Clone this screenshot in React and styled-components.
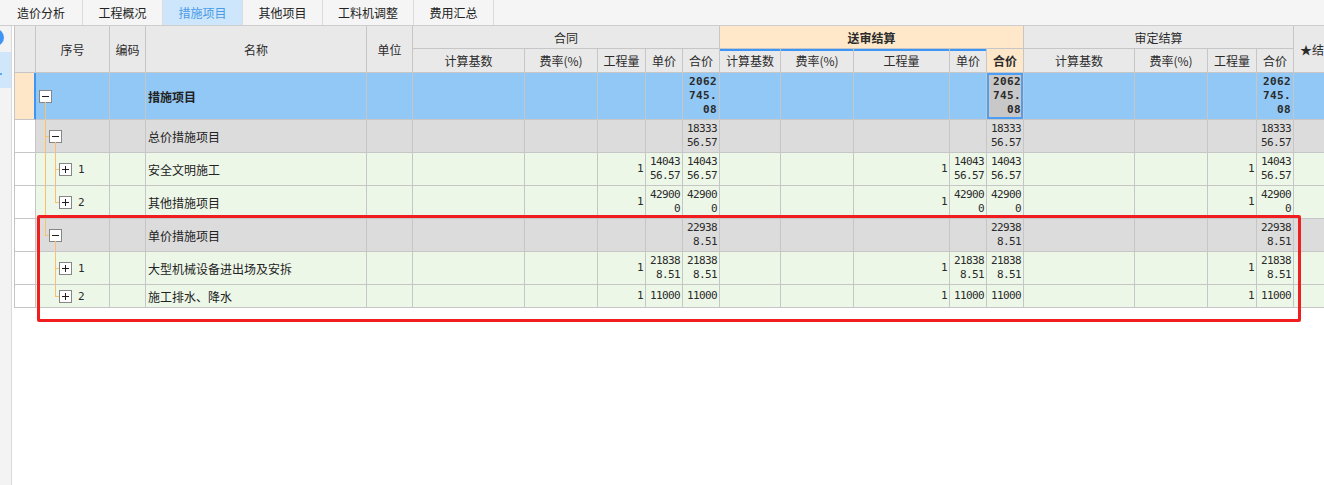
import React from 'react'
import styled, { createGlobalStyle } from 'styled-components'

const GlobalStyle = createGlobalStyle`
  html, body { margin: 0; padding: 0; background: #fff; }
`

const Page = styled.div`
  position: relative;
  width: 1324px;
  height: 485px;
  overflow: hidden;
  display: flex;
  flex-direction: column;
  background: #fff;
  font-family: "Noto Sans CJK SC", "Noto Sans", sans-serif;
  font-size: 12px;
  color: #2b2b2b;
`
const TabBar = styled.div`
  display: flex;
  flex: none;
  height: 25px;
  background: #f5f5f5;
  border-bottom: 1px solid #cdcdcd;
`
const Tab = styled.div`
  width: ${p => p.$w}px;
  box-sizing: border-box;
  display: flex;
  align-items: center;
  justify-content: center;
  border-right: 1px solid #dcdcdc;
  background: ${p => (p.$active ? '#cde6fb' : 'transparent')};
  color: ${p => (p.$active ? '#4a9ae6' : '#222')};
`
const Body = styled.div`
  display: flex;
  flex: 1;
  min-height: 0;
`
const Sidebar = styled.div`
  flex: none;
  width: 12px;
  box-sizing: border-box;
  background: #f3f3f3;
  border-right: 1px solid #dadada;
  overflow: hidden;
`
const SideDot = styled.div`
  width: 17px;
  height: 17px;
  margin: 3px 0 0 -13px;
  border-radius: 50%;
  background: #3d95f5;
`
const SideTab = styled.div`
  position: relative;
  height: 36px;
  margin-top: 6px;
  background: #cfe6fb;
  &::before {
    content: '';
    position: absolute;
    left: 0;
    top: 21px;
    width: 2px;
    height: 2px;
    background: #5aaaf0;
  }
`
const Main = styled.div`
  flex: 1;
  min-width: 0;
  overflow: hidden;
  padding-left: 2px;
`
const Grid = styled.table`
  border-collapse: separate;
  border-spacing: 0;
  table-layout: fixed;
  width: 1347px;
  border-left: 1px solid #c4c4c4;
`
const HeadRow = styled.tr`
  height: ${p => p.$h}px;
`
const HeadCell = styled.th`
  padding: 0;
  padding-left: ${p => (p.$left ? '6px' : '0')};
  background: ${p => (p.$accent ? '#fee8c9' : '#e9e9e9')};
  border-right: 1px solid #c6c6c6;
  border-bottom: 1px solid #c6c6c6;
  font-weight: ${p => (p.$bold ? 700 : 400)};
  text-align: ${p => (p.$left ? 'left' : 'center')};
  white-space: nowrap;
  overflow: hidden;
  color: #2b2b2b;
  box-shadow: ${p => (p.$topline ? 'inset 0 2px 0 #3d95f5' : 'none')};
`
const ROW_BG = { top: '#92c8f5', group: '#dcdcdc', item: '#edf7e8' }

const Row = styled.tr`
  height: ${p => p.$h}px;
  background: ${p => ROW_BG[p.$kind]};
`
const Cell = styled.td`
  padding: 0;
  border-right: 1px solid #c6c6c6;
  border-bottom: 1px solid #c6c6c6;
  vertical-align: middle;
  white-space: nowrap;
  overflow: hidden;
`
const IndCell = styled(Cell)`
  background: ${p => (p.$mark ? '#fde7c8' : '#fff')};
  border-right-color: ${p => (p.$mark ? '#3d95f5' : '#c6c6c6')};
  box-shadow: ${p => (p.$mark ? 'inset -1px 0 0 #3d95f5' : 'none')};
`
const TreeCell = styled(Cell)`
  position: relative;
`
const NameCell = styled(Cell)`
  padding-left: 2px;
  font-weight: ${p => (p.$bold ? 700 : 400)};
  color: #222;
`
const NumCell = styled(Cell)`
  padding-right: 2px;
  text-align: right;
  font-family: "DejaVu Sans Mono", "Liberation Mono", monospace;
  font-size: 11px;
  line-height: 14px;
  letter-spacing: ${p => (p.$bold ? '0.4px' : '-0.6px')};
  font-weight: ${p => (p.$bold ? 700 : 400)};
  color: #2b2b2b;
  background: ${p => (p.$selected ? '#c8c8c8' : 'transparent')};
  box-shadow: ${p => (p.$selected ? 'inset 0 0 0 2px #4d9ff6' : 'none')};
`
const TreeNode = styled.div`
  display: flex;
  align-items: center;
  padding-left: ${p => 3 + p.$level * 10}px;
`
const SeqLabel = styled.span`
  margin-left: 6px;
  font-family: "DejaVu Sans Mono", "Liberation Mono", monospace;
  font-size: 11px;
  color: #2b2b2b;
`
const Rail = styled.span`
  position: absolute;
  left: ${p => p.$x}px;
  top: ${p => p.$top};
  bottom: ${p => p.$bottom};
  width: 1px;
  background: #ffbf66;
`
const Tick = styled.span`
  position: absolute;
  left: ${p => p.$x}px;
  top: 50%;
  width: 4px;
  height: 1px;
  background: #ffbf66;
`
const Frame = styled.div`
  position: absolute;
  left: 37px;
  top: 215px;
  width: 1264px;
  height: 107px;
  box-sizing: border-box;
  border: 3px solid #f01e1e;
  border-radius: 2px;
  pointer-events: none;
`

const COLS = [21, 74, 36, 221, 46, 112, 73, 48, 37, 37, 61, 73, 96, 37, 37, 111, 73, 49, 37, 67]

const TABS = [
  { label: '造价分析', w: 83 },
  { label: '工程概况', w: 80 },
  { label: '措施项目', w: 80, active: true },
  { label: '其他项目', w: 80 },
  { label: '工料机调整', w: 91 },
  { label: '费用汇总', w: 80 },
]

const rows = [
  { kind: 'top', h: 47, level: 0, open: true, rails: [], name: '措施项目', total: ['2062', '745.', '08'] },
  { kind: 'group', h: 33, level: 1, open: true, last: false, rails: [], name: '总价措施项目', total: ['18333', '56.57'] },
  { kind: 'item', h: 33, level: 2, last: false, rails: [9], seq: '1', name: '安全文明施工', qty: '1', price: ['14043', '56.57'], total: ['14043', '56.57'] },
  { kind: 'item', h: 33, level: 2, last: true, rails: [9], seq: '2', name: '其他措施项目', qty: '1', price: ['42900', '0'], total: ['42900', '0'] },
  { kind: 'group', h: 33, level: 1, open: true, last: true, rails: [], name: '单价措施项目', total: ['22938', '8.51'] },
  { kind: 'item', h: 33, level: 2, last: false, rails: [], seq: '1', name: '大型机械设备进出场及安拆', qty: '1', price: ['21838', '8.51'], total: ['21838', '8.51'] },
  { kind: 'item', h: 23, level: 2, last: true, rails: [], seq: '2', name: '施工排水、降水', qty: '1', price: ['11000'], total: ['11000'] },
]

const ToggleBox = ({ open }) => (
  <svg width="13" height="13" viewBox="0 0 13 13">
    <rect x="0.5" y="0.5" width="12" height="12" fill="#fff" stroke="#868686" />
    <line x1="3" y1="6.5" x2="10" y2="6.5" stroke="#1f1f1f" />
    {!open && <line x1="6.5" y1="3" x2="6.5" y2="10" stroke="#1f1f1f" />}
  </svg>
)

const Tree = ({ row }) => (
  <TreeCell>
    {row.rails.map(x => (
      <Rail key={x} $x={x} $top="0" $bottom="-1px" />
    ))}
    {row.level > 0 && (
      <>
        <Rail $x={9 + (row.level - 1) * 10} $top="0" $bottom={row.last ? '50%' : '-1px'} />
        <Tick $x={9 + (row.level - 1) * 10} />
      </>
    )}
    {row.open && <Rail $x={9 + row.level * 10} $top="calc(50% + 6px)" $bottom="-1px" />}
    <TreeNode $level={row.level}>
      <ToggleBox open={row.open} />
      {row.seq && <SeqLabel>{row.seq}</SeqLabel>}
    </TreeNode>
  </TreeCell>
)

const Num = ({ lines, bold, selected }) => (
  <NumCell $bold={bold} $selected={selected}>
    {lines && lines.map((l, i) => <div key={i}>{l}</div>)}
  </NumCell>
)

const App = () => {
  return (
    <Page>
      <GlobalStyle />
      <TabBar>
        {TABS.map(t => (
          <Tab key={t.label} $w={t.w} $active={t.active}>{t.label}</Tab>
        ))}
      </TabBar>
      <Body>
        <Sidebar>
          <SideDot />
          <SideTab />
        </Sidebar>
        <Main>
          <Grid>
            <colgroup>
              {COLS.map((w, i) => (
                <col key={i} style={{ width: w }} />
              ))}
            </colgroup>
            <thead>
              <HeadRow $h={23}>
                <HeadCell rowSpan={2} />
                <HeadCell rowSpan={2}>序号</HeadCell>
                <HeadCell rowSpan={2}>编码</HeadCell>
                <HeadCell rowSpan={2}>名称</HeadCell>
                <HeadCell rowSpan={2}>单位</HeadCell>
                <HeadCell colSpan={5}>合同</HeadCell>
                <HeadCell colSpan={5} $accent $bold>送审结算</HeadCell>
                <HeadCell colSpan={4}>审定结算</HeadCell>
                <HeadCell rowSpan={2} $left>★结算方式</HeadCell>
              </HeadRow>
              <HeadRow $h={24}>
                <HeadCell>计算基数</HeadCell>
                <HeadCell>费率(%)</HeadCell>
                <HeadCell>工程量</HeadCell>
                <HeadCell>单价</HeadCell>
                <HeadCell>合价</HeadCell>
                <HeadCell $topline>计算基数</HeadCell>
                <HeadCell $topline>费率(%)</HeadCell>
                <HeadCell $topline>工程量</HeadCell>
                <HeadCell $topline>单价</HeadCell>
                <HeadCell $accent $bold>合价</HeadCell>
                <HeadCell>计算基数</HeadCell>
                <HeadCell>费率(%)</HeadCell>
                <HeadCell>工程量</HeadCell>
                <HeadCell>合价</HeadCell>
              </HeadRow>
            </thead>
            <tbody>
              {rows.map((r, i) => {
                const bold = r.kind === 'top'
                return (
                  <Row key={i} $h={r.h} $kind={r.kind}>
                    <IndCell $mark={bold} />
                    <Tree row={r} />
                    <Cell />
                    <NameCell $bold={bold}>{r.name}</NameCell>
                    <Cell />
                    <Cell />
                    <Cell />
                    <Num lines={r.qty && [r.qty]} />
                    <Num lines={r.price} />
                    <Num lines={r.total} bold={bold} />
                    <Cell />
                    <Cell />
                    <Num lines={r.qty && [r.qty]} />
                    <Num lines={r.price} />
                    <Num lines={r.total} bold={bold} selected={bold} />
                    <Cell />
                    <Cell />
                    <Num lines={r.qty && [r.qty]} />
                    <Num lines={r.total} bold={bold} />
                    <Cell />
                  </Row>
                )
              })}
            </tbody>
          </Grid>
        </Main>
      </Body>
      <Frame />
    </Page>
  )
}

export default App
